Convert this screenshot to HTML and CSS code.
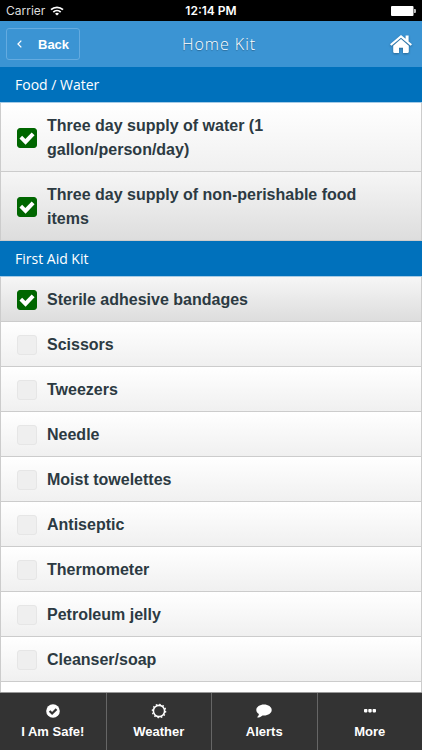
FILE: index.html
```html
<!DOCTYPE html>
<html lang="en">
<head>
    <meta charset="UTF-8">
    <meta name="viewport" content="width=device-width, initial-scale=1.0">
    <title>Home Kit</title>

    <link rel="stylesheet" href="styles.css">
</head>
<body>
    <div class="status-bar">
        <div class="carrier">
            Carrier
            <svg class="wifi" width="14" height="10" viewBox="0 0 14 10" fill="none" stroke="#fff" stroke-width="1.8">
                <path d="M1 3.7a8.7 8.7 0 0 1 12 0M3.3 6.1a5.4 5.4 0 0 1 7.4 0"/>
                <path d="M7 9.6L5 7.7a2.9 2.9 0 0 1 4 0z" fill="#fff" stroke="none"/>
            </svg>
        </div>
        <div class="clock">12:14 PM</div>
        <svg class="battery" width="25" height="10" viewBox="0 0 25 10" fill="#fff">
            <rect width="22.5" height="10" rx="1"/>
            <path d="M23 3h1a1 1 0 0 1 1 1v2a1 1 0 0 1-1 1h-1z" fill="#bbb"/>
        </svg>
    </div>

    <header class="header">
        <button class="back" type="button">
            <svg width="5" height="8" viewBox="0 0 5 8" fill="none" stroke="#fff" stroke-width="1.3"><path d="M4.3.6L1 4l3.3 3.4"/></svg>
            Back
        </button>
        <h1>Home Kit</h1>
        <a class="home" href="#" aria-label="Home">
            <svg width="22" height="18" viewBox="0 0 22 18" fill="#fff">
                <path d="M11 0L0 9.3l1.4 1.5L11 2.8l9.6 8 1.4-1.5-3.4-2.9V.6h-3v3.2z"/>
                <path d="M11 4.1l-7.8 6.6v6.1c0 .7.4 1.2 1.1 1.2H9v-5.2h4V18h4.7c.7 0 1.1-.5 1.1-1.2v-6.1z"/>
            </svg>
        </a>
    </header>

    <main class="content">
        <h2>Food / Water</h2>
        <ul class="kit">
            <li><label><input type="checkbox" checked><span>Three day supply of water (1 gallon/person/day)</span></label></li>
            <li class="active"><label><input type="checkbox" checked><span>Three day supply of non-perishable food items</span></label></li>
        </ul>

        <h2>First Aid Kit</h2>
        <ul class="kit fill">
            <li class="active"><label><input type="checkbox" checked><span>Sterile adhesive bandages</span></label></li>
            <li><label><input type="checkbox"><span>Scissors</span></label></li>
            <li><label><input type="checkbox"><span>Tweezers</span></label></li>
            <li><label><input type="checkbox"><span>Needle</span></label></li>
            <li><label><input type="checkbox"><span>Moist towelettes</span></label></li>
            <li><label><input type="checkbox"><span>Antiseptic</span></label></li>
            <li><label><input type="checkbox"><span>Thermometer</span></label></li>
            <li><label><input type="checkbox"><span>Petroleum jelly</span></label></li>
            <li><label><input type="checkbox"><span>Cleanser/soap</span></label></li>
        </ul>
    </main>

    <nav class="tabs">
        <a href="#">
            <svg width="14" height="14" viewBox="0 0 14 14"><circle cx="7" cy="7" r="6.8" fill="#fff"/><path d="M3.6 7l2.5 2.5 4.4-4.4" fill="none" stroke="#333" stroke-width="2.2"/></svg>
            I Am Safe!
        </a>
        <a href="#">
            <svg width="16" height="16" viewBox="0 0 16 16" fill="none" stroke="#fff">
                <circle cx="8" cy="8" r="5.6" stroke-width="1.6"/>
                <circle cx="8" cy="8" r="6.7" stroke-width="1.2" stroke-dasharray="1.6 1.908"/>
            </svg>
            Weather
        </a>
        <a href="#">
            <svg width="16" height="14" viewBox="0 0 16 14" fill="#fff"><path d="M8 .5c4.2 0 7.7 2.4 7.7 5.5S12.2 11.500 8 11.500l-1.500-.1C5.2 12.7 3.5 13.4 1.600 13.500c-.4 0-.4-.4-.1-.7.9-.8 1.300-1.600 1.400-2.700C1.300 9.100.3 7.600.3 6 .3 2.900 3.800.5 8 .5z"/></svg>
            Alerts
        </a>
        <a href="#">
            <svg width="12" height="14" viewBox="0 0 12 14" fill="#fff"><rect y="5" width="3.4" height="3.4" rx=".8"/><rect x="4.3" y="5" width="3.4" height="3.4" rx=".8"/><rect x="8.6" y="5" width="3.4" height="3.4" rx=".8"/></svg>
            More
        </a>
    </nav>
</body>
</html>
```

FILE: styles.css
```css
* {
    box-sizing: border-box;
}

body {
    margin: 0;
    height: 100vh;
    display: flex;
    flex-direction: column;
    overflow: hidden;
    font-family: "Liberation Sans", Arial, sans-serif;
    background: #fff;
}

.status-bar {
    display: grid;
    grid-template-columns: 1fr auto 1fr;
    align-items: center;
    height: 21px;
    padding: 0 6px;
    background: #000;
    color: #fff;
    font-family: Inter, sans-serif;
    font-size: 12px;
}

.carrier {
    display: flex;
    align-items: center;
    gap: 5px;
    color: #ddd;
}

.clock {
    font-weight: 600;
}

.battery {
    justify-self: end;
}

.header {
    display: grid;
    grid-template-columns: 1fr auto 1fr;
    align-items: center;
    height: 46px;
    padding: 0 10px 0 6px;
    background: #3b94d3;
    color: #fff;
}

.header h1 {
    margin: 0 0 0 20px;
    font-family: "Open Sans", sans-serif;
    font-size: 16px;
    font-weight: 300;
    line-height: 20px;
    letter-spacing: 1px;
    text-shadow: 0 1px 1px rgba(0, 0, 0, 0.3);
}

.back {
    justify-self: start;
    display: flex;
    align-items: center;
    gap: 16px;
    height: 32px;
    padding: 0 10px;
    background: none;
    border: 1px solid #64abe0;
    border-radius: 3px;
    color: #fff;
    font-family: "Liberation Sans", Arial, sans-serif;
    font-size: 13px;
    font-weight: bold;
    cursor: pointer;
}

.home {
    justify-self: end;
    display: flex;
    filter: drop-shadow(0 1px 1px rgba(0, 0, 0, 0.3));
}

.content {
    flex: 1;
    min-height: 0;
    display: flex;
    flex-direction: column;
    overflow: hidden;
}

.content h2 {
    margin: 0;
    padding: 0 15px;
    border-bottom: 1px solid #a5cbe6;
    background: #0071bc;
    color: #fff;
    font-family: "Open Sans", sans-serif;
    font-size: 14px;
    font-weight: 400;
    line-height: 35px;
}

.kit {
    margin: 0;
    padding: 0;
    list-style: none;
    border: solid #ccc;
    border-width: 0 1px;
}

.kit.fill {
    flex: 1;
}

.kit label {
    display: flex;
    align-items: center;
    gap: 10px;
    padding: 11px 46px 9px 16px;
    border-bottom: 1px solid #ccc;
    background: linear-gradient(#fff, #f0f0f0);
    color: #2c3a42;
    font-size: 16px;
    font-weight: bold;
    line-height: 24px;
}

.kit .active label {
    background: linear-gradient(#f6f6f6, #ddd);
}

.kit input {
    appearance: none;
    flex: none;
    width: 20px;
    height: 20px;
    margin: 0;
    border: 1px solid #e6e6e6;
    border-radius: 3px;
    background: #efefef;
}

.kit input:checked {
    border-color: #060;
    background: #060;
}

/* tick */
.kit input:checked::before {
    content: "";
    display: block;
    width: 18px;
    height: 18px;
    background: #fff;
    clip-path: polygon(8% 53%, 23% 38%, 41% 56%, 76% 20%, 92% 35%, 42% 88%);
}

.tabs {
    display: grid;
    grid-template-columns: repeat(4, 1fr);
    height: 58px;
    border-top: 1px solid #999;
    background: #333;
}

.tabs a {
    display: flex;
    flex-direction: column;
    align-items: center;
    padding-top: 10px;
    color: #fff;
    font-size: 13px;
    font-weight: bold;
    line-height: 26px;
    text-decoration: none;
}

.tabs svg {
    height: 16px;
}

.tabs a + a {
    border-left: 1px solid #666;
}
```
